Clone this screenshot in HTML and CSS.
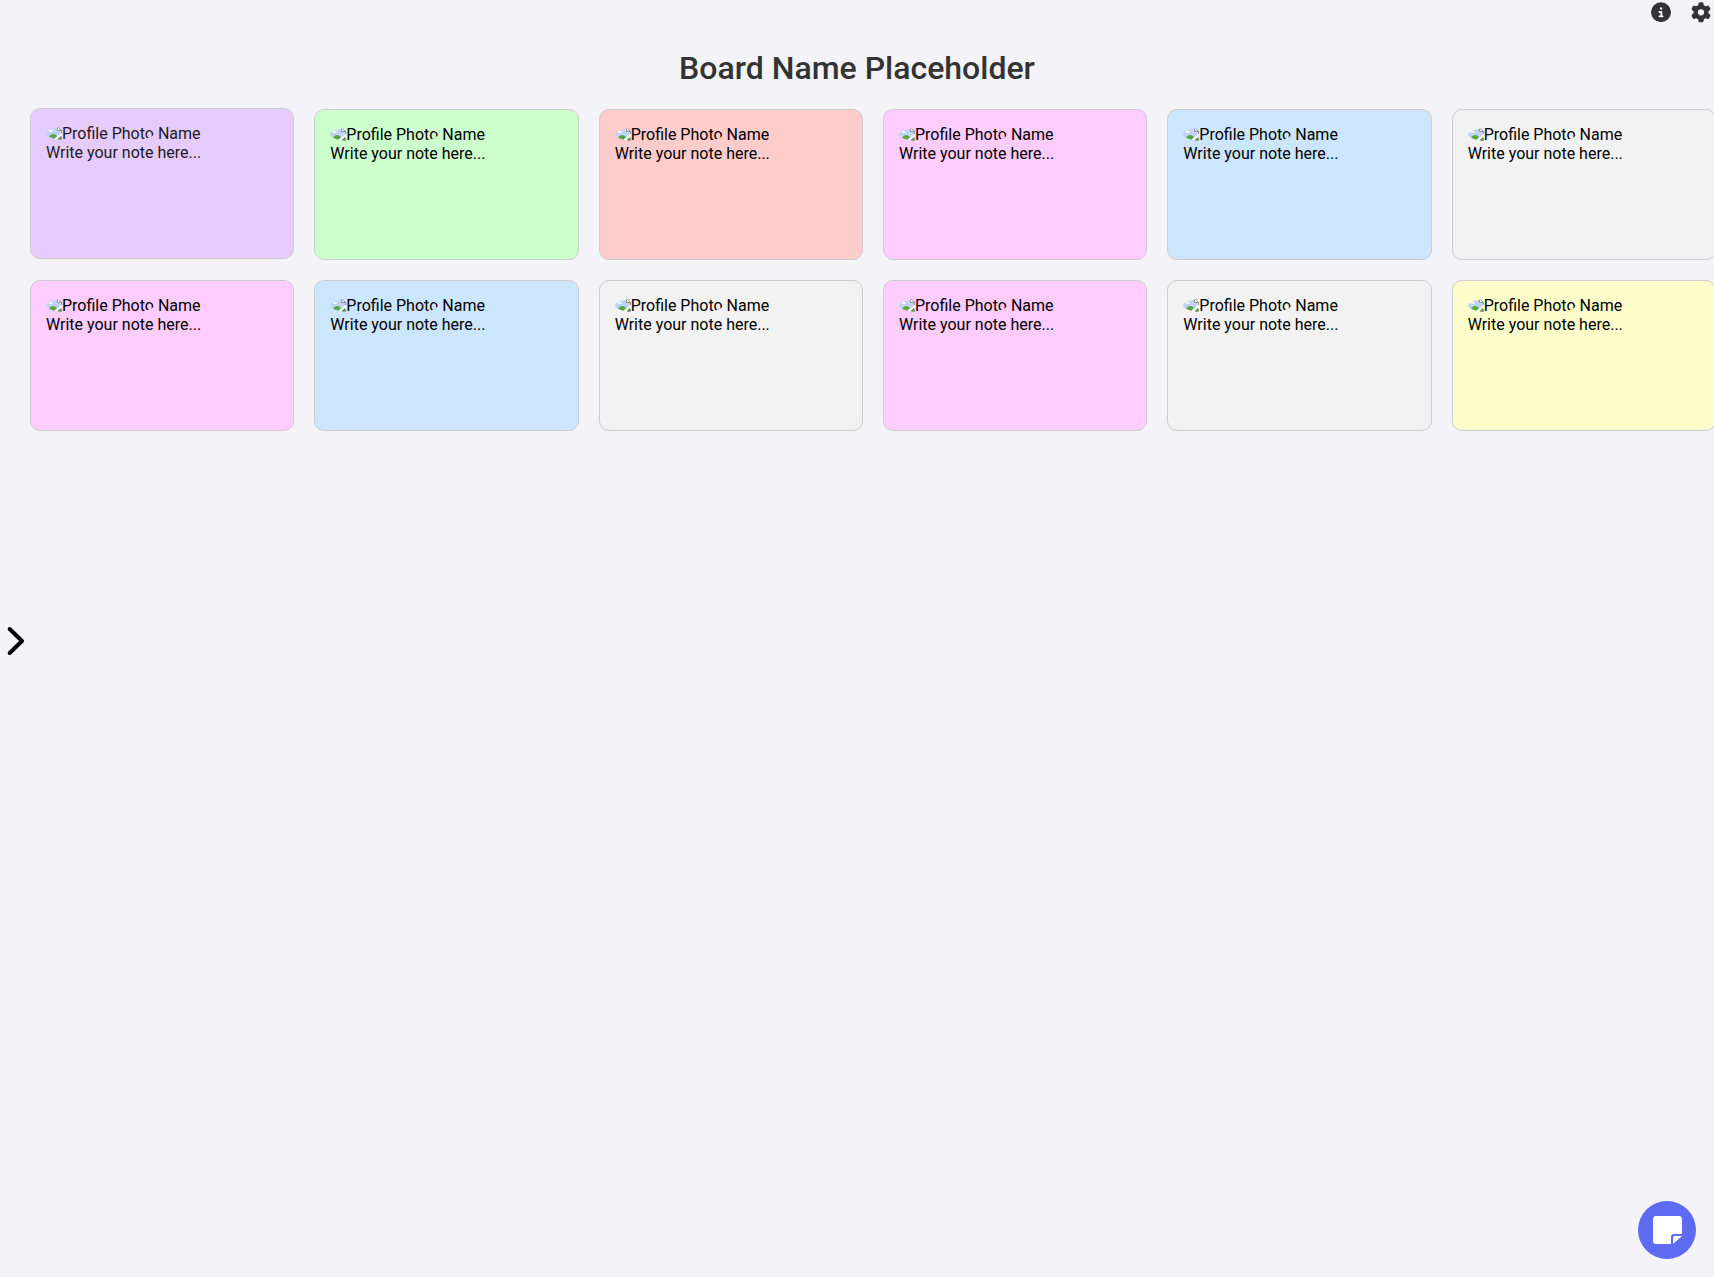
FILE: index.html
```html
<!DOCTYPE html>
<html lang="en">
<head>
<meta charset="utf-8">
<title>Board</title>
<link rel="stylesheet" href="styles.css">
</head>
<body>
<svg class="defs" aria-hidden="true">
  <symbol id="broken" viewBox="0 0 16 16">
    <path d="M0 2h11l4 4v9H0z" fill="#c0d3f5"/>
    <path d="M0 2.500h11M15.500 6v4M12 15.500h3.500V13" fill="none" stroke="#929292"/>
    <path d="M11.500 2.500v4h4z" fill="#f4f4f4" stroke="#929292"/>
    <path d="M3 7a1.500 1.500 0 0 1 2.500-.8 1.200 1.200 0 0 1 1.200 1.600H3z" fill="#fff"/>
    <path d="M3 13c1-2 2.500-3 4-3s3 .8 4 2l-3 3H3z" fill="#57a83c"/>
    <path d="M8 15.500l8-7v2.500l-5 4.500z" fill="#fff"/>
    <path d="M11.500 15l3.500-3v3z" fill="#57a83c"/>
  </symbol>
</svg>
<header class="toolbar">
  <svg class="tool" viewBox="0 0 512 512"><path d="M256 512A256 256 0 1 0 256 0a256 256 0 1 0 0 512zM216 336h24V272H216c-13.300 0-24-10.700-24-24s10.700-24 24-24h48c13.300 0 24 10.700 24 24v88h8c13.300 0 24 10.700 24 24s-10.700 24-24 24H216c-13.300 0-24-10.700-24-24s10.700-24 24-24zm40-208a32 32 0 1 1 0 64 32 32 0 1 1 0-64z"/></svg>
  <svg class="tool" viewBox="0 0 512 512"><path d="M495.900 166.600c3.200 8.700 .5 18.400-6.400 24.600l-43.300 39.400c1.100 8.300 1.700 16.800 1.700 25.400s-.6 17.100-1.700 25.400l43.300 39.400c6.900 6.200 9.600 15.900 6.400 24.600c-4.400 11.900-9.700 23.300-15.800 34.300l-4.700 8.100c-6.600 11-14 21.400-22.100 31.200c-5.900 7.200-15.700 9.600-24.500 6.800l-55.700-17.700c-13.400 10.300-28.200 18.900-44 25.400l-12.500 57.100c-2 9.100-9 16.300-18.200 17.800c-13.800 2.300-28 3.500-42.500 3.500s-28.700-1.200-42.500-3.500c-9.200-1.500-16.200-8.700-18.200-17.800l-12.500-57.100c-15.800-6.500-30.600-15.100-44-25.400L83.100 425.900c-8.800 2.800-18.600 .3-24.500-6.800c-8.100-9.800-15.500-20.200-22.100-31.200l-4.700-8.100c-6.100-11-11.400-22.400-15.800-34.300c-3.200-8.700-.5-18.400 6.400-24.600l43.300-39.400C64.600 273.100 64 264.600 64 256s.6-17.100 1.700-25.400L22.400 191.200c-6.900-6.200-9.600-15.900-6.400-24.600c4.400-11.900 9.700-23.300 15.800-34.300l4.700-8.100c6.600-11 14-21.400 22.100-31.200c5.900-7.200 15.700-9.600 24.500-6.800l55.700 17.700c13.400-10.300 28.200-18.900 44-25.400l12.500-57.100c2-9.100 9-16.300 18.200-17.800C227.300 1.200 241.500 0 256 0s28.700 1.200 42.500 3.500c9.200 1.500 16.200 8.700 18.200 17.800l12.500 57.100c15.800 6.500 30.600 15.100 44 25.400l55.700-17.700c8.800-2.800 18.600-.3 24.500 6.800c8.100 9.800 15.500 20.200 22.100 31.200l4.700 8.100c6.100 11 11.400 22.400 15.800 34.300zM256 336a80 80 0 1 0 0-160 80 80 0 1 0 0 160z"/></svg>
</header>
<h1 class="title">Board Name Placeholder</h1>
<main class="board">
  <article class="note purple raised"><div class="author"><span class="photo"><svg><use href="#broken"/></svg>Profile Photo</span> Name</div><div>Write your note here...</div></article>
  <article class="note green"><div class="author"><span class="photo"><svg><use href="#broken"/></svg>Profile Photo</span> Name</div><div>Write your note here...</div></article>
  <article class="note red"><div class="author"><span class="photo"><svg><use href="#broken"/></svg>Profile Photo</span> Name</div><div>Write your note here...</div></article>
  <article class="note pink"><div class="author"><span class="photo"><svg><use href="#broken"/></svg>Profile Photo</span> Name</div><div>Write your note here...</div></article>
  <article class="note blue"><div class="author"><span class="photo"><svg><use href="#broken"/></svg>Profile Photo</span> Name</div><div>Write your note here...</div></article>
  <article class="note gray"><div class="author"><span class="photo"><svg><use href="#broken"/></svg>Profile Photo</span> Name</div><div>Write your note here...</div></article>
  <article class="note pink"><div class="author"><span class="photo"><svg><use href="#broken"/></svg>Profile Photo</span> Name</div><div>Write your note here...</div></article>
  <article class="note blue"><div class="author"><span class="photo"><svg><use href="#broken"/></svg>Profile Photo</span> Name</div><div>Write your note here...</div></article>
  <article class="note gray"><div class="author"><span class="photo"><svg><use href="#broken"/></svg>Profile Photo</span> Name</div><div>Write your note here...</div></article>
  <article class="note pink"><div class="author"><span class="photo"><svg><use href="#broken"/></svg>Profile Photo</span> Name</div><div>Write your note here...</div></article>
  <article class="note gray"><div class="author"><span class="photo"><svg><use href="#broken"/></svg>Profile Photo</span> Name</div><div>Write your note here...</div></article>
  <article class="note yellow"><div class="author"><span class="photo"><svg><use href="#broken"/></svg>Profile Photo</span> Name</div><div>Write your note here...</div></article>
</main>
<svg class="drawer" viewBox="0 0 20 30"><path d="M3.700 3l12.300 12L3.700 27"/></svg>
<div class="add">
  <svg viewBox="0 0 29 28"><path d="M3 0h23a3 3 0 0 1 3 3v15h-8a3 3 0 0 0-3 3v7H3a3 3 0 0 1-3-3V3a3 3 0 0 1 3-3z"/><path d="M20 28v-6.500a1.500 1.500 0 0 1 1.500-1.500H29z"/></svg>
</div>
</body>
</html>
```

FILE: styles.css
```css
* { box-sizing: border-box; }

body {
  margin: 0;
  height: 100vh;
  overflow: hidden;
  background: #f4f3f8;
  color: #000;
  font: 16px/19px Roboto, sans-serif;
}

.defs { display: none; }

.toolbar {
  display: flex;
  justify-content: flex-end;
  gap: 20px;
  height: 49px;
  padding: 2px 3px 0 0;
}

.tool { width: 20px; height: 20.6px; fill: #333; }

.title {
  margin: 0;
  color: #333;
  font-size: 32px;
  font-weight: 500;
  line-height: 38px;
  text-align: center;
}

.board {
  display: grid;
  grid-template-columns: repeat(6, 264.34px);
  grid-auto-rows: 151px;
  gap: 20px;
  padding: 22px 0 0 30px;
}

.note {
  padding: 15px;
  border: 1px solid #ccc;
  border-radius: 10px;
}

.raised { transform: translateY(-1px); opacity: 0.99; }
.raised div { color: #1c1820; }

.author { display: flex; gap: 4px; }

.photo {
  display: flex;
  height: 19px;
  overflow: hidden;
  border-radius: 50%;
}

.photo svg { width: 16px; height: 16px; }

.purple { background: #e6ccff; }
.green { background: #ccffcc; }
.red { background: #ffcccc; }
.pink { background: #ffccff; }
.blue { background: #cce6ff; }
.gray { background: #f2f2f2; }
.yellow { background: #ffffcc; }

.drawer {
  position: fixed;
  left: 6px;
  top: 626px;
  width: 20px;
  height: 30px;
  fill: none;
  stroke: #000;
  stroke-width: 4;
  stroke-linecap: round;
  stroke-linejoin: round;
}

.add {
  position: fixed;
  right: 18px;
  bottom: 18px;
  display: grid;
  place-items: center;
  width: 58px;
  height: 58px;
  border-radius: 50%;
  background: #5d6af2;
}

.add svg { width: 29px; height: 28px; fill: #fff; }
```
